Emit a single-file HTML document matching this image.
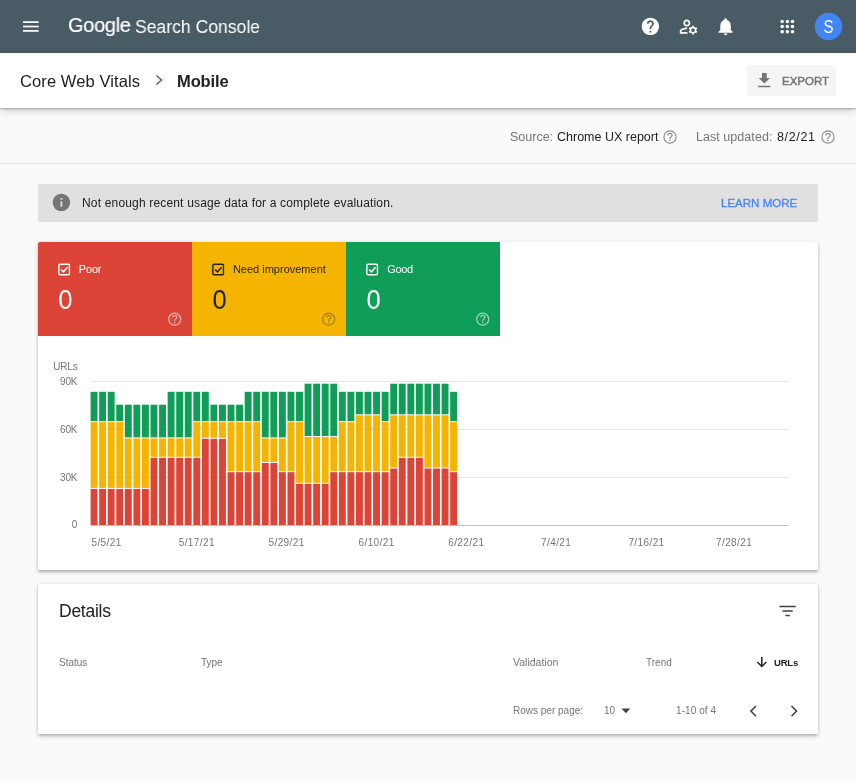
<!DOCTYPE html>
<html><head><meta charset="utf-8">
<style>
*{box-sizing:border-box;margin:0;padding:0}
html,body{width:856px;height:783px;overflow:hidden;background:#fafafa;font-family:"Liberation Sans",sans-serif;color:#212121}
.abs{position:absolute}
.t,svg{will-change:transform}
#top{position:absolute;left:0;top:0;width:856px;height:53px;background:#495b64}
#sub{position:absolute;left:0;top:53px;width:856px;height:55px;background:#fff;box-shadow:0 1px 2px rgba(0,0,0,.26),0 3px 8px rgba(0,0,0,.16)}
.t{position:absolute;white-space:nowrap;line-height:1}
#src{position:absolute;left:0;top:108px;width:856px;height:56px;border-bottom:1px solid #e4e4e4}
#banner{position:absolute;left:38px;top:184px;width:780px;height:38px;background:#e0e0e0}
.card{position:absolute;background:#fff;box-shadow:0 1.500px 3px rgba(0,0,0,.24),0 2px 6px rgba(0,0,0,.09);border-radius:1px}
</style></head><body>
<div id="top">
 <svg class="abs" style="left:22px;top:20px" width="18" height="13" viewBox="0 0 18 13"><rect x="1" y="1.250" width="15.700" height="1.700" fill="#fff"/><rect x="1" y="5.650" width="15.700" height="1.700" fill="#fff"/><rect x="1" y="10.050" width="15.700" height="1.700" fill="#fff"/></svg>
 <div class="t" style="left:68px;top:14px;font-size:21px;color:#fff;letter-spacing:-0.3px;transform-origin:0 0;transform:scaleX(.95);-webkit-text-stroke:.2px #fff">Google</div>
 <div class="t" style="left:135px;top:18px;font-size:18.700px;color:#fff;letter-spacing:0;transform-origin:0 0;transform:scaleX(.94)">Search Console</div>
 <!-- help -->
 <svg class="abs" style="left:640.100px;top:15.800px" width="20.800" height="20.800" viewBox="0 0 24 24"><path fill="#fff" d="M12 2C6.48 2 2 6.48 2 12s4.48 10 10 10 10-4.480 10-10S17.520 2 12 2zm1 17h-2v-2h2v2zm2.070-7.750l-.9.920C13.450 12.900 13 13.500 13 15h-2v-.5c0-1.100.450-2.100 1.170-2.830l1.240-1.260c.370-.360.590-.860.590-1.410 0-1.100-.9-2-2-2s-2 .9-2 2H8c0-2.210 1.790-4 4-4s4 1.790 4 4c0 .880-.360 1.680-.930 2.250z"/></svg>
 <!-- manage accounts -->
 <svg class="abs" style="left:677.500px;top:16.200px" width="21.200" height="21.200" viewBox="0 0 24 24"><path fill="#fff" d="M4 18v-.65c0-.34.16-.66.41-.81C6.100 15.530 8.030 15 10 15c.030 0 .050 0 .080.010.1-.7.300-1.370.590-1.980-.220-.020-.440-.030-.670-.030-2.420 0-4.680.670-6.610 1.820-.880.520-1.390 1.500-1.390 2.530V20h9.260c-.420-.6-.750-1.280-.970-2H4zM10 12c2.210 0 4-1.790 4-4s-1.790-4-4-4-4 1.790-4 4 1.790 4 4 4zm0-6c1.100 0 2 .9 2 2s-.9 2-2 2-2-.9-2-2 .9-2 2-2zM20.750 16c0-.220-.030-.420-.060-.630l1.140-1.010-1-1.730-1.450.490c-.320-.270-.680-.480-1.080-.630L18 11h-2l-.3 1.490c-.4.150-.760.360-1.080.630l-1.450-.490-1 1.730 1.140 1.010c-.030.210-.060.410-.060.630s.030.420.060.630l-1.140 1.010 1 1.730 1.450-.490c.320.270.680.480 1.080.630L16 21h2l.3-1.490c.4-.150.760-.360 1.080-.630l1.450.490 1-1.730-1.140-1.010c.030-.210.060-.410.060-.630zM17 18c-1.100 0-2-.9-2-2s.9-2 2-2 2 .9 2 2-.9 2-2 2z"/></svg>
 <!-- bell -->
 <svg class="abs" style="left:715.400px;top:16.100px" width="21.100" height="21.100" viewBox="0 0 24 24"><path fill="#fff" d="M12 22c1.100 0 2-.9 2-2h-4c0 1.100.890 2 2 2zm6-6v-5c0-3.070-1.640-5.640-4.500-6.320V4c0-.830-.670-1.500-1.500-1.500s-1.500.670-1.500 1.500v.68C7.630 5.360 6 7.920 6 11v5l-2 2v1h16v-1l-2-2z"/></svg>
 <!-- apps -->
 <svg class="abs" style="left:778.200px;top:16.900px" width="20" height="20" viewBox="0 0 20 20" fill="#fff"><circle cx="4.200" cy="4.500" r="1.750"/><circle cx="9.400" cy="4.500" r="1.750"/><circle cx="14.500" cy="4.500" r="1.750"/><circle cx="4.200" cy="9.600" r="1.750"/><circle cx="9.400" cy="9.600" r="1.750"/><circle cx="14.500" cy="9.600" r="1.750"/><circle cx="4.200" cy="14.700" r="1.750"/><circle cx="9.400" cy="14.700" r="1.750"/><circle cx="14.500" cy="14.700" r="1.750"/></svg>
 <svg class="abs" style="left:812px;top:10px" width="34" height="34" viewBox="0 0 34 34"><circle cx="16.500" cy="16.500" r="13.700" fill="#4285f4"/><text transform="translate(16.400 22.900) scale(.86 1)" font-size="17.500" fill="#fff" text-anchor="middle" font-family="Liberation Sans, sans-serif">S</text></svg>
</div>
<div id="sub">
 <div class="t" style="left:20px;top:19.600px;font-size:16.500px;color:#212121;letter-spacing:.1px">Core Web Vitals</div>
 <svg class="abs" style="left:153.800px;top:21.300px" width="10" height="12" viewBox="0 0 10 12"><path d="M2.500 1.500L7.500 6 2.500 10.500" stroke="#616161" stroke-width="1.500" fill="none"/></svg>
 <div class="t" style="left:176.500px;top:19.600px;font-size:16.500px;font-weight:bold;color:#212121;letter-spacing:-.1px">Mobile</div>
 <div class="abs" style="left:747px;top:12px;width:89px;height:31px;background:#f5f5f5;border-radius:2px"></div>
 <svg class="abs" style="left:755px;top:17px" width="18" height="18" viewBox="0 0 18 18"><path fill="#757575" d="M7 3h4.700v5h3.300l-5.650 5.600L3.700 8H7zM3.200 15.700h12.100v1.600H3.200z"/></svg>
 <div class="t" style="left:781.500px;top:22.500px;font-size:11.500px;color:#757575;-webkit-text-stroke:.45px #757575;letter-spacing:0">EXPORT</div>
</div>
<div id="src">
 <div class="t" style="left:510px;top:23px;font-size:12.500px;color:#757575">Source:</div>
 <div class="t" style="left:557px;top:23px;font-size:12.500px;color:#212121">Chrome UX report</div>
 <svg class="abs" style="left:662.200px;top:21px" width="16" height="16" viewBox="0 0 16 16"><circle cx="8" cy="8" r="6.100" fill="none" stroke="#8a8a8a" stroke-width="1.100"/><text x="8" y="11.600" font-size="10.500" text-anchor="middle" fill="#808080" stroke="#808080" stroke-width=".2" font-family="Liberation Sans, sans-serif">?</text></svg>
 <div class="t" style="left:695.500px;top:23px;font-size:12.500px;color:#757575;letter-spacing:.05px">Last updated:</div>
 <div class="t" style="left:777px;top:23px;font-size:12.500px;color:#212121;letter-spacing:.65px">8/2/21</div>
 <svg class="abs" style="left:819.700px;top:21px" width="16" height="16" viewBox="0 0 16 16"><circle cx="8" cy="8" r="6.100" fill="none" stroke="#8a8a8a" stroke-width="1.100"/><text x="8" y="11.600" font-size="10.500" text-anchor="middle" fill="#808080" stroke="#808080" stroke-width=".2" font-family="Liberation Sans, sans-serif">?</text></svg>
</div>
<div id="banner">
 <svg class="abs" style="left:13.200px;top:8.200px" width="20.800" height="20.800" viewBox="0 0 24 24"><path fill="#757575" d="M12 2C6.480 2 2 6.480 2 12s4.480 10 10 10 10-4.480 10-10S17.520 2 12 2zm1 15h-2v-6h2v6zm0-8h-2V7h2v2z"/></svg>
 <div class="t" style="left:43.700px;top:13px;font-size:12px;color:#212121;letter-spacing:.17px">Not enough recent usage data for a complete evaluation.</div>
 <div class="t" style="left:683px;top:13.500px;font-size:11.500px;color:#4285f4;letter-spacing:.02px;-webkit-text-stroke:.3px #4285f4">LEARN MORE</div>
</div>
<div class="card" style="left:38px;top:242px;width:780px;height:328px"></div>
<!-- tiles -->
<div class="abs" style="left:38px;top:242px;width:154px;height:94px;background:#db4437;border-radius:2px 0 0 0"></div>
<div class="abs" style="left:192px;top:242px;width:154px;height:94px;background:#f4b400"></div>
<div class="abs" style="left:346px;top:242px;width:154px;height:94px;background:#0f9d58"></div>
<svg class="abs" style="left:0;top:0" width="856" height="783" viewBox="0 0 856 783" font-family="Liberation Sans, sans-serif">
 <!-- tile content -->
 <g fill="none" stroke="#fff" stroke-width="1.400"><rect x="58.850" y="264.200" width="10.600" height="10.600" rx="1.200"/><path stroke-width="1.500" d="M61.100 269.500l2.300 2.300 4.200-4.500"/></g>
 <text x="78.800" y="273.300" font-size="11" fill="#fff" textLength="22.700">Poor</text>
 <text transform="translate(58.3 309.400) scale(.9 1)" font-size="28.400" fill="#fff">0</text>
 <g fill="none" stroke="#212121" stroke-width="1.400"><rect x="212.850" y="264.200" width="10.600" height="10.600" rx="1.200"/><path stroke-width="1.500" d="M215.100 269.500l2.300 2.300 4.200-4.500"/></g>
 <text x="232.900" y="273.300" font-size="11" fill="#2b2410">Need improvement</text>
 <text transform="translate(212.4 309.400) scale(.9 1)" font-size="28.400" fill="#212121">0</text>
 <g fill="none" stroke="#fff" stroke-width="1.400"><rect x="366.850" y="264.200" width="10.600" height="10.600" rx="1.200"/><path stroke-width="1.500" d="M369.100 269.500l2.300 2.300 4.200-4.500"/></g>
 <text x="387.200" y="273.300" font-size="11" fill="#fff" textLength="26">Good</text>
 <text transform="translate(366.4 309.400) scale(.9 1)" font-size="28.400" fill="#fff">0</text>
 <g fill="none" stroke="#f1b4ae" stroke-width="1.200"><circle cx="174.700" cy="319.200" r="6"/></g><text x="174.700" y="322.800" font-size="10" text-anchor="middle" fill="#f1b4ae" stroke="#f1b4ae" stroke-width=".25">?</text>
 <g fill="none" stroke="#a77b00" stroke-width="1.200"><circle cx="328.700" cy="319.200" r="6"/></g><text x="328.700" y="322.800" font-size="10" text-anchor="middle" fill="#a77b00" stroke="#a77b00" stroke-width=".25">?</text>
 <g fill="none" stroke="#9fd8bc" stroke-width="1.200"><circle cx="482.700" cy="319.200" r="6"/></g><text x="482.700" y="322.800" font-size="10" text-anchor="middle" fill="#9fd8bc" stroke="#9fd8bc" stroke-width=".25">?</text>
 <!-- chart -->
 <g stroke="#e4e4e4" stroke-width="1"><path d="M91 381.500H788.500M91 429.500H788.500M91 477.500H788.500"/></g>

 <g font-size="10" fill="#757575" letter-spacing="-.2">
  <text x="53.300" y="369.700">URLs</text>
  <text x="77.300" y="385.400" text-anchor="end">90K</text>
  <text x="77.300" y="433.100" text-anchor="end">60K</text>
  <text x="77.300" y="480.800" text-anchor="end">30K</text>
  <text x="77" y="528" text-anchor="end">0</text>
 </g>
 <g font-size="10" fill="#757575" letter-spacing=".4">
  <text x="106.600" y="545.500" text-anchor="middle">5/5/21</text>
  <text x="196.800" y="545.500" text-anchor="middle">5/17/21</text>
  <text x="286.600" y="545.500" text-anchor="middle">5/29/21</text>
  <text x="376.600" y="545.500" text-anchor="middle">6/10/21</text>
  <text x="466.300" y="545.500" text-anchor="middle">6/22/21</text>
  <text x="556.200" y="545.500" text-anchor="middle">7/4/21</text>
  <text x="646.500" y="545.500" text-anchor="middle">7/16/21</text>
  <text x="734.100" y="545.500" text-anchor="middle">7/28/21</text>
 </g>
<rect x="90.60" y="391.8" width="6.9" height="29.3" fill="#0f9d58"/>
<rect x="90.60" y="422.1" width="6.9" height="65.8" fill="#f4b400"/>
<rect x="90.60" y="488.9" width="6.9" height="36.1" fill="#db4437"/>
<rect x="99.16" y="391.8" width="6.9" height="29.3" fill="#0f9d58"/>
<rect x="99.16" y="422.1" width="6.9" height="65.8" fill="#f4b400"/>
<rect x="99.16" y="488.9" width="6.9" height="36.1" fill="#db4437"/>
<rect x="107.72" y="391.8" width="6.9" height="29.3" fill="#0f9d58"/>
<rect x="107.72" y="422.1" width="6.9" height="65.8" fill="#f4b400"/>
<rect x="107.72" y="488.9" width="6.9" height="36.1" fill="#db4437"/>
<rect x="116.28" y="404.7" width="6.9" height="16.4" fill="#0f9d58"/>
<rect x="116.28" y="422.1" width="6.9" height="65.8" fill="#f4b400"/>
<rect x="116.28" y="488.9" width="6.9" height="36.1" fill="#db4437"/>
<rect x="124.84" y="404.7" width="6.9" height="32.7" fill="#0f9d58"/>
<rect x="124.84" y="438.4" width="6.9" height="49.5" fill="#f4b400"/>
<rect x="124.84" y="488.9" width="6.9" height="36.1" fill="#db4437"/>
<rect x="133.41" y="404.7" width="6.9" height="32.7" fill="#0f9d58"/>
<rect x="133.41" y="438.4" width="6.9" height="49.5" fill="#f4b400"/>
<rect x="133.41" y="488.9" width="6.9" height="36.1" fill="#db4437"/>
<rect x="141.97" y="404.7" width="6.9" height="32.7" fill="#0f9d58"/>
<rect x="141.97" y="438.4" width="6.9" height="49.5" fill="#f4b400"/>
<rect x="141.97" y="488.9" width="6.9" height="36.1" fill="#db4437"/>
<rect x="150.53" y="404.7" width="6.9" height="32.7" fill="#0f9d58"/>
<rect x="150.53" y="438.4" width="6.9" height="18.4" fill="#f4b400"/>
<rect x="150.53" y="457.8" width="6.9" height="67.2" fill="#db4437"/>
<rect x="159.09" y="404.7" width="6.9" height="32.7" fill="#0f9d58"/>
<rect x="159.09" y="438.4" width="6.9" height="18.4" fill="#f4b400"/>
<rect x="159.09" y="457.8" width="6.9" height="67.2" fill="#db4437"/>
<rect x="167.65" y="391.8" width="6.9" height="45.6" fill="#0f9d58"/>
<rect x="167.65" y="438.4" width="6.9" height="18.4" fill="#f4b400"/>
<rect x="167.65" y="457.8" width="6.9" height="67.2" fill="#db4437"/>
<rect x="176.21" y="391.8" width="6.9" height="45.6" fill="#0f9d58"/>
<rect x="176.21" y="438.4" width="6.9" height="18.4" fill="#f4b400"/>
<rect x="176.21" y="457.8" width="6.9" height="67.2" fill="#db4437"/>
<rect x="184.77" y="391.8" width="6.9" height="45.6" fill="#0f9d58"/>
<rect x="184.77" y="438.4" width="6.9" height="18.4" fill="#f4b400"/>
<rect x="184.77" y="457.8" width="6.9" height="67.2" fill="#db4437"/>
<rect x="193.33" y="391.8" width="6.9" height="29.3" fill="#0f9d58"/>
<rect x="193.33" y="422.1" width="6.9" height="34.7" fill="#f4b400"/>
<rect x="193.33" y="457.8" width="6.9" height="67.2" fill="#db4437"/>
<rect x="201.89" y="391.8" width="6.9" height="29.3" fill="#0f9d58"/>
<rect x="201.89" y="422.1" width="6.9" height="15.7" fill="#f4b400"/>
<rect x="201.89" y="438.8" width="6.9" height="86.2" fill="#db4437"/>
<rect x="210.45" y="404.7" width="6.9" height="16.4" fill="#0f9d58"/>
<rect x="210.45" y="422.1" width="6.9" height="15.7" fill="#f4b400"/>
<rect x="210.45" y="438.8" width="6.9" height="86.2" fill="#db4437"/>
<rect x="219.01" y="404.7" width="6.9" height="16.4" fill="#0f9d58"/>
<rect x="219.01" y="422.1" width="6.9" height="15.7" fill="#f4b400"/>
<rect x="219.01" y="438.8" width="6.9" height="86.2" fill="#db4437"/>
<rect x="227.58" y="404.7" width="6.9" height="16.4" fill="#0f9d58"/>
<rect x="227.58" y="422.1" width="6.9" height="49.1" fill="#f4b400"/>
<rect x="227.58" y="472.2" width="6.9" height="52.8" fill="#db4437"/>
<rect x="236.14" y="404.7" width="6.9" height="16.4" fill="#0f9d58"/>
<rect x="236.14" y="422.1" width="6.9" height="49.1" fill="#f4b400"/>
<rect x="236.14" y="472.2" width="6.9" height="52.8" fill="#db4437"/>
<rect x="244.70" y="391.8" width="6.9" height="29.3" fill="#0f9d58"/>
<rect x="244.70" y="422.1" width="6.9" height="49.1" fill="#f4b400"/>
<rect x="244.70" y="472.2" width="6.9" height="52.8" fill="#db4437"/>
<rect x="253.26" y="391.8" width="6.9" height="29.3" fill="#0f9d58"/>
<rect x="253.26" y="422.1" width="6.9" height="49.1" fill="#f4b400"/>
<rect x="253.26" y="472.2" width="6.9" height="52.8" fill="#db4437"/>
<rect x="261.82" y="391.8" width="6.9" height="45.6" fill="#0f9d58"/>
<rect x="261.82" y="438.4" width="6.9" height="23.6" fill="#f4b400"/>
<rect x="261.82" y="463.0" width="6.9" height="62.0" fill="#db4437"/>
<rect x="270.38" y="391.8" width="6.9" height="45.6" fill="#0f9d58"/>
<rect x="270.38" y="438.4" width="6.9" height="23.6" fill="#f4b400"/>
<rect x="270.38" y="463.0" width="6.9" height="62.0" fill="#db4437"/>
<rect x="278.94" y="391.8" width="6.9" height="45.6" fill="#0f9d58"/>
<rect x="278.94" y="438.4" width="6.9" height="32.8" fill="#f4b400"/>
<rect x="278.94" y="472.2" width="6.9" height="52.8" fill="#db4437"/>
<rect x="287.50" y="391.8" width="6.9" height="29.3" fill="#0f9d58"/>
<rect x="287.50" y="422.1" width="6.9" height="49.1" fill="#f4b400"/>
<rect x="287.50" y="472.2" width="6.9" height="52.8" fill="#db4437"/>
<rect x="296.06" y="391.8" width="6.9" height="29.3" fill="#0f9d58"/>
<rect x="296.06" y="422.1" width="6.9" height="60.7" fill="#f4b400"/>
<rect x="296.06" y="483.8" width="6.9" height="41.2" fill="#db4437"/>
<rect x="304.62" y="383.7" width="6.9" height="52.3" fill="#0f9d58"/>
<rect x="304.62" y="437.0" width="6.9" height="45.8" fill="#f4b400"/>
<rect x="304.62" y="483.8" width="6.9" height="41.2" fill="#db4437"/>
<rect x="313.19" y="383.7" width="6.9" height="52.3" fill="#0f9d58"/>
<rect x="313.19" y="437.0" width="6.9" height="45.8" fill="#f4b400"/>
<rect x="313.19" y="483.8" width="6.9" height="41.2" fill="#db4437"/>
<rect x="321.75" y="383.7" width="6.9" height="52.3" fill="#0f9d58"/>
<rect x="321.75" y="437.0" width="6.9" height="45.8" fill="#f4b400"/>
<rect x="321.75" y="483.8" width="6.9" height="41.2" fill="#db4437"/>
<rect x="330.31" y="383.7" width="6.9" height="52.3" fill="#0f9d58"/>
<rect x="330.31" y="437.0" width="6.9" height="34.2" fill="#f4b400"/>
<rect x="330.31" y="472.2" width="6.9" height="52.8" fill="#db4437"/>
<rect x="338.87" y="391.8" width="6.9" height="29.3" fill="#0f9d58"/>
<rect x="338.87" y="422.1" width="6.9" height="49.1" fill="#f4b400"/>
<rect x="338.87" y="472.2" width="6.9" height="52.8" fill="#db4437"/>
<rect x="347.43" y="391.8" width="6.9" height="29.3" fill="#0f9d58"/>
<rect x="347.43" y="422.1" width="6.9" height="49.1" fill="#f4b400"/>
<rect x="347.43" y="472.2" width="6.9" height="52.8" fill="#db4437"/>
<rect x="355.99" y="391.8" width="6.9" height="22.5" fill="#0f9d58"/>
<rect x="355.99" y="415.3" width="6.9" height="55.9" fill="#f4b400"/>
<rect x="355.99" y="472.2" width="6.9" height="52.8" fill="#db4437"/>
<rect x="364.55" y="391.8" width="6.9" height="22.5" fill="#0f9d58"/>
<rect x="364.55" y="415.3" width="6.9" height="55.9" fill="#f4b400"/>
<rect x="364.55" y="472.2" width="6.9" height="52.8" fill="#db4437"/>
<rect x="373.11" y="391.8" width="6.9" height="22.5" fill="#0f9d58"/>
<rect x="373.11" y="415.3" width="6.9" height="55.9" fill="#f4b400"/>
<rect x="373.11" y="472.2" width="6.9" height="52.8" fill="#db4437"/>
<rect x="381.67" y="391.8" width="6.9" height="29.3" fill="#0f9d58"/>
<rect x="381.67" y="422.1" width="6.9" height="49.1" fill="#f4b400"/>
<rect x="381.67" y="472.2" width="6.9" height="52.8" fill="#db4437"/>
<rect x="390.24" y="383.7" width="6.9" height="30.6" fill="#0f9d58"/>
<rect x="390.24" y="415.3" width="6.9" height="52.2" fill="#f4b400"/>
<rect x="390.24" y="468.5" width="6.9" height="56.5" fill="#db4437"/>
<rect x="398.80" y="383.7" width="6.9" height="30.6" fill="#0f9d58"/>
<rect x="398.80" y="415.3" width="6.9" height="41.5" fill="#f4b400"/>
<rect x="398.80" y="457.8" width="6.9" height="67.2" fill="#db4437"/>
<rect x="407.36" y="383.7" width="6.9" height="30.6" fill="#0f9d58"/>
<rect x="407.36" y="415.3" width="6.9" height="41.5" fill="#f4b400"/>
<rect x="407.36" y="457.8" width="6.9" height="67.2" fill="#db4437"/>
<rect x="415.92" y="383.7" width="6.9" height="30.6" fill="#0f9d58"/>
<rect x="415.92" y="415.3" width="6.9" height="41.5" fill="#f4b400"/>
<rect x="415.92" y="457.8" width="6.9" height="67.2" fill="#db4437"/>
<rect x="424.48" y="383.7" width="6.9" height="30.6" fill="#0f9d58"/>
<rect x="424.48" y="415.3" width="6.9" height="52.2" fill="#f4b400"/>
<rect x="424.48" y="468.5" width="6.9" height="56.5" fill="#db4437"/>
<rect x="433.04" y="383.7" width="6.9" height="30.6" fill="#0f9d58"/>
<rect x="433.04" y="415.3" width="6.9" height="52.2" fill="#f4b400"/>
<rect x="433.04" y="468.5" width="6.9" height="56.5" fill="#db4437"/>
<rect x="441.60" y="383.7" width="6.9" height="30.6" fill="#0f9d58"/>
<rect x="441.60" y="415.3" width="6.9" height="52.2" fill="#f4b400"/>
<rect x="441.60" y="468.5" width="6.9" height="56.5" fill="#db4437"/>
<rect x="450.16" y="391.8" width="6.9" height="29.3" fill="#0f9d58"/>
<rect x="450.16" y="422.1" width="6.9" height="49.1" fill="#f4b400"/>
<rect x="450.16" y="472.2" width="6.9" height="52.8" fill="#db4437"/>
<path d="M91 525.500H788.500" stroke="#c0c0c0" stroke-width="1"/>
</svg>
<!-- details -->
<div class="card" style="left:38px;top:584px;width:780px;height:150px">
 <div class="t" style="left:20.500px;top:18.500px;font-size:17.500px;color:#212121;letter-spacing:-.25px">Details</div>
 <svg class="abs" style="left:740px;top:20px" width="20" height="14" viewBox="0 0 20 14"><path d="M1.500 2.500h16.200M4.400 7h10.300M7.400 11.400h4.400" stroke="#424242" stroke-width="1.500" fill="none"/></svg>
 <div class="t" style="left:20.500px;top:73.500px;font-size:10px;color:#757575">Status</div>
 <div class="t" style="left:163px;top:73.500px;font-size:10px;color:#757575">Type</div>
 <div class="t" style="left:475px;top:73.100px;font-size:10.500px;color:#757575">Validation</div>
 <div class="t" style="left:607.500px;top:73.500px;font-size:10px;color:#757575">Trend</div>
 <svg class="abs" style="left:717px;top:71px" width="14" height="14" viewBox="0 0 14 14"><path d="M6.800 2v9.400M2.300 7l4.500 4.500 4.500-4.500" stroke="#212121" stroke-width="1.500" fill="none"/></svg>
 <div class="t" style="left:736px;top:74px;font-size:9.500px;color:#212121;font-weight:bold;letter-spacing:-.2px">URLs</div>
 <div class="t" style="left:475px;top:122px;font-size:10px;color:#757575">Rows per page:</div>
 <div class="t" style="left:566px;top:122px;font-size:10px;color:#757575">10</div>
 <svg class="abs" style="left:583px;top:124px" width="10" height="6" viewBox="0 0 10 6"><path d="M0.500 0.600h8.800l-4.400 4.600z" fill="#424242"/></svg>
 <div class="t" style="left:637.500px;top:122px;font-size:10px;color:#757575;letter-spacing:.07px">1-10 of 4</div>
 <svg class="abs" style="left:710px;top:119.700px" width="10" height="14" viewBox="0 0 10 14"><path d="M8 2L2.900 7.100 8 12.200" stroke="#424242" stroke-width="1.500" fill="none"/></svg>
 <svg class="abs" style="left:751px;top:119.700px" width="10" height="14" viewBox="0 0 10 14"><path d="M2.500 2L7.600 7.100 2.500 12.200" stroke="#424242" stroke-width="1.500" fill="none"/></svg>
</div>
</body></html>
